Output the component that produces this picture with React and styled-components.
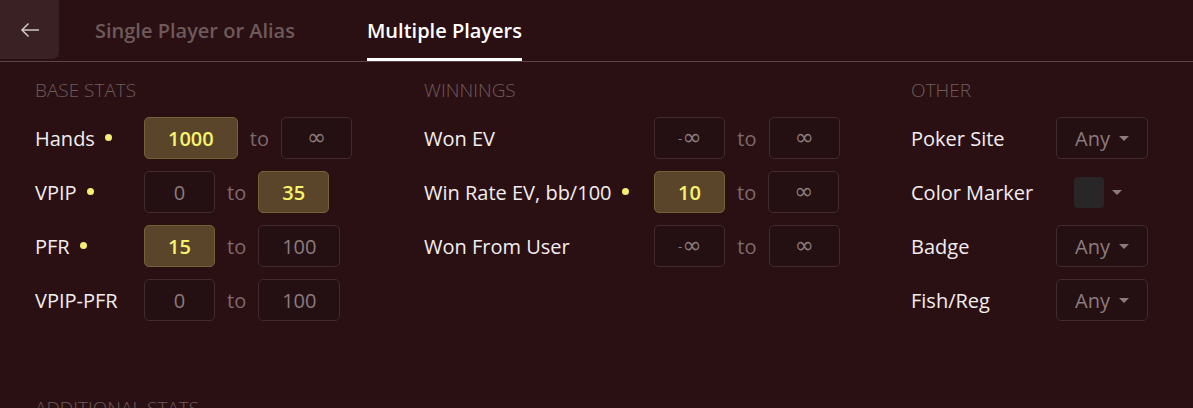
import React from 'react';
import styled, { createGlobalStyle } from 'styled-components';

const GlobalStyle = createGlobalStyle`
    html, body {
        margin: 0;
        padding: 0;
        background-color: #2b1013;
        font-family: "Open Sans", "Noto Sans", "DejaVu Sans", sans-serif;
        overflow: hidden;
    }
`;

const Page = styled.div`
    width: 1193px;
    height: 408px;
    background-color: #2b1013;
    color: #f2eeee;
    overflow: hidden;
`;

const Header = styled.div`
    display: flex;
    align-items: stretch;
    height: 61px;
    border-bottom: 1px solid #5a4446;
`;

const BackButton = styled.button`
    width: 59px;
    height: 59px;
    border: none;
    border-radius: 0 0 7px 0;
    background-color: #3a2224;
    display: flex;
    align-items: center;
    justify-content: center;
    padding: 0;
    cursor: pointer;
`;

const Tab = styled.div`
    display: flex;
    align-items: stretch;
    padding: 0 36px;
`;

const TabLabel = styled.span`
    display: flex;
    align-items: center;
    font-size: 20px;
    font-weight: 600;
    color: ${(props) => (props.active ? '#ffffff' : '#6d5a5b')};
    border-bottom: 3px solid ${(props) => (props.active ? '#ffffff' : 'transparent')};
    padding-top: 3px;
`;

const Content = styled.div`
    padding: 14px 0 0 35px;
`;

const SectionsRow = styled.div`
    display: flex;
`;

const Section = styled.div`
    width: ${(props) => props.width}px;
    flex-shrink: 0;
`;

const SectionTitle = styled.div`
    height: 28px;
    line-height: 28px;
    font-size: 19px;
    font-weight: 300;
    color: #6e5b5c;
    text-transform: uppercase;
    margin-bottom: 13px;
`;

const Rows = styled.div`
    display: flex;
    flex-direction: column;
    gap: 12px;
`;

const Row = styled.div`
    display: grid;
    grid-template-columns: ${(props) => props.labelWidth}px auto;
    align-items: center;
    height: 42px;
`;

const Label = styled.div`
    display: flex;
    align-items: center;
    font-size: 20px;
    color: #f2eeee;
    white-space: nowrap;
`;

const Dot = styled.span`
    width: 7px;
    height: 7px;
    border-radius: 50%;
    background-color: #f4ee76;
    margin-left: 10px;
    margin-top: -2px;
`;

const Range = styled.div`
    display: flex;
    align-items: center;
    gap: 12px;
`;

const To = styled.span`
    font-size: 20px;
    color: #7d6a6b;
`;

const Input = styled.div`
    box-sizing: border-box;
    height: 42px;
    min-width: 71px;
    padding: 0 23px;
    display: inline-flex;
    align-items: center;
    justify-content: center;
    border-radius: 5px;
    border: 1px solid ${(props) => (props.active ? '#76623a' : '#432a2c')};
    background-color: ${(props) => (props.active ? '#5a452a' : '#241012')};
    color: ${(props) => (props.active ? '#f6f36e' : '#8b7b7c')};
    font-size: 20px;
    font-weight: ${(props) => (props.active ? 600 : 400)};
`;

const Inf = styled.span`
    font-family: "DejaVu Sans", sans-serif;
    font-size: 23px;
    line-height: 1;
    margin-top: -2px;
`;

const Minus = styled.span`
    font-size: 13px;
`;

const Select = styled.div`
    box-sizing: border-box;
    width: 92px;
    height: 42px;
    display: flex;
    align-items: center;
    padding-left: 18px;
    gap: 9px;
    border-radius: 5px;
    border: 1px solid #432a2c;
    background-color: #241012;
    color: #8b7b7c;
    font-size: 20px;
`;

const Caret = styled.span`
    width: 0;
    height: 0;
    border-left: 5.5px solid transparent;
    border-right: 5.5px solid transparent;
    border-top: 5px solid #8b7b7c;
    margin-top: 1px;
`;

const ColorPicker = styled.div`
    display: flex;
    align-items: center;
    gap: 8px;
    padding-left: 18px;
`;

const Swatch = styled.div`
    width: 30px;
    height: 31px;
    border-radius: 4px;
    background-color: #282626;
`;

const AdditionalTitle = styled(SectionTitle)`
    margin-top: 73px;
`;

const renderValue = (v) => {
    if (v === '∞') return <Inf>∞</Inf>;
    if (v === '-∞') return (<><Minus>-</Minus><Inf>∞</Inf></>);
    return v;
};

const RangeInput = ({ from, to, fromActive, toActive }) => (
    <Range>
        <Input active={fromActive}>{renderValue(from)}</Input>
        <To>to</To>
        <Input active={toActive}>{renderValue(to)}</Input>
    </Range>
);

const baseStats = [
    { label: 'Hands', dot: true, from: '1000', to: '∞', fromActive: true },
    { label: 'VPIP', dot: true, from: '0', to: '35', toActive: true },
    { label: 'PFR', dot: true, from: '15', to: '100', fromActive: true },
    { label: 'VPIP-PFR', from: '0', to: '100' },
];

const winnings = [
    { label: 'Won EV', from: '-∞', to: '∞' },
    { label: 'Win Rate EV, bb/100', dot: true, from: '10', to: '∞', fromActive: true },
    { label: 'Won From User', from: '-∞', to: '∞' },
];

const other = [
    { label: 'Poker Site' },
    { label: 'Color Marker', color: true },
    { label: 'Badge' },
    { label: 'Fish/Reg' },
];

export default function App() {
    return (
        <Page>
            <GlobalStyle />
            <Header>
                <BackButton>
                    <svg width="20" height="16" viewBox="0 0 20 16" fill="none">
                        <path d="M19 8H2M8.5 1.5L2 8l6.5 6.5" stroke="#cfc6c6" strokeWidth="1.5" />
                    </svg>
                </BackButton>
                <Tab>
                    <TabLabel>Single Player or Alias</TabLabel>
                </Tab>
                <Tab>
                    <TabLabel active>Multiple Players</TabLabel>
                </Tab>
            </Header>
            <Content>
                <SectionsRow>
                    <Section width={389}>
                        <SectionTitle>Base Stats</SectionTitle>
                        <Rows>
                            {baseStats.map((s) => (
                                <Row key={s.label} labelWidth={109}>
                                    <Label>{s.label}{s.dot && <Dot />}</Label>
                                    <RangeInput {...s} />
                                </Row>
                            ))}
                        </Rows>
                    </Section>
                    <Section width={487}>
                        <SectionTitle>Winnings</SectionTitle>
                        <Rows>
                            {winnings.map((s) => (
                                <Row key={s.label} labelWidth={230}>
                                    <Label>{s.label}{s.dot && <Dot />}</Label>
                                    <RangeInput {...s} />
                                </Row>
                            ))}
                        </Rows>
                    </Section>
                    <Section width={270}>
                        <SectionTitle>Other</SectionTitle>
                        <Rows>
                            {other.map((s) => (
                                <Row key={s.label} labelWidth={145}>
                                    <Label>{s.label}</Label>
                                    {s.color ? (
                                        <ColorPicker>
                                            <Swatch />
                                            <Caret />
                                        </ColorPicker>
                                    ) : (
                                        <Select>Any<Caret /></Select>
                                    )}
                                </Row>
                            ))}
                        </Rows>
                    </Section>
                </SectionsRow>
                <AdditionalTitle>Additional Stats</AdditionalTitle>
            </Content>
        </Page>
    );
}
